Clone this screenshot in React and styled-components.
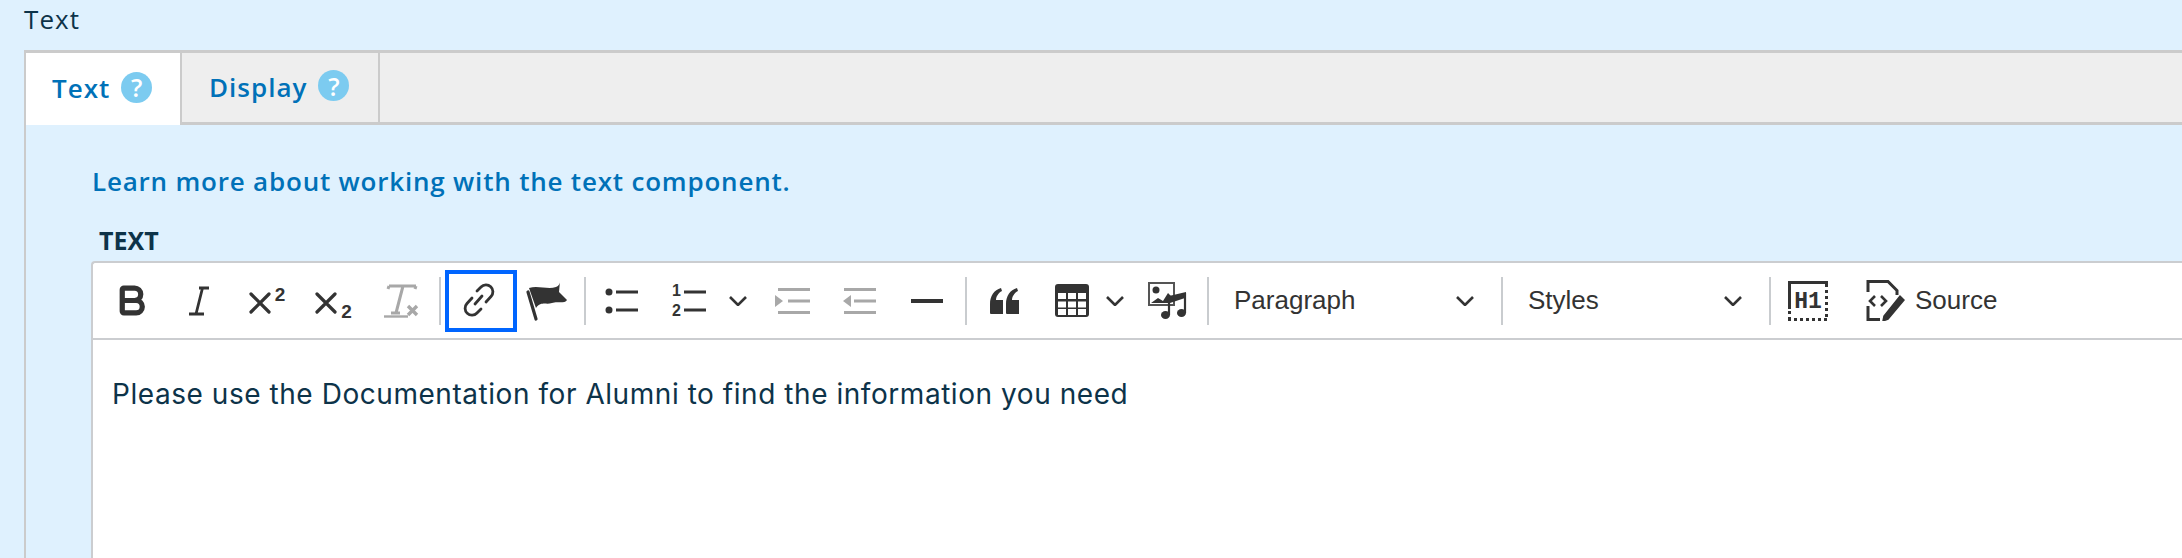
import styled, { createGlobalStyle } from 'styled-components'
import { Bold } from 'lucide-react'

const GlobalStyle = createGlobalStyle`
  html, body {
    margin: 0;
    height: 558px;
    overflow: hidden;
    background: #dff1fe;
  }
`

const Page = styled.div`
  height: 558px;
  overflow: hidden;
  padding-left: 24px;
  color: #0d3349;
  font-family: "Open Sans", "DejaVu Sans", sans-serif;
`

const FieldLabel = styled.div`
  height: 38px;
  line-height: 38px;
  margin-bottom: 12px;
  font-size: 26px;
  letter-spacing: 1.1px;
`

const Panel = styled.div`
  border-top: 3px solid #cbcbcb;
  border-left: 2px solid #cbcbcb;
`

const TabBar = styled.div`
  display: flex;
  height: 69px;
  background: #eeeeee;
  border-bottom: 3px solid #cbcbcb;
`

const Tab = styled.div`
  display: flex;
  align-items: center;
  gap: 11px;
  width: ${(p) => p.$w}px;
  height: ${(p) => (p.$active ? 72 : 69)}px;
  padding: 0 0 2px ${(p) => p.$pad}px;
  box-sizing: border-box;
  border-right: 2px solid #cbcbcb;
  background: ${(p) => (p.$active ? '#fff' : 'transparent')};
  color: #0071b8;
  font-size: 26px;
  font-weight: 600;
  letter-spacing: 1px;
`

const HelpBadge = styled.span`
  display: inline-flex;
  align-items: center;
  justify-content: center;
  width: 31px;
  height: 31px;
  margin-top: -2px;
  border-radius: 50%;
  background: #7ccbf0;
  color: #fff;
  font-size: 25px;
  font-weight: 600;
  letter-spacing: 0;
`

const Content = styled.div`
  padding: 38px 0 0 65px;
`

const LearnLink = styled.a`
  display: block;
  height: 36px;
  line-height: 36px;
  margin-left: 1px;
  color: #0071b8;
  font-size: 26px;
  font-weight: 600;
  letter-spacing: 0.8px;
`

const EditorLabel = styled.div`
  height: 36px;
  line-height: 36px;
  margin: 23px 0 3px 8px;
  font-size: 25px;
  font-weight: 700;
`

const Editor = styled.div`
  border: 2px solid #cbcdd0;
  border-right: none;
  border-radius: 4px 0 0 0;
  background: #fff;
`

const Toolbar = styled.div`
  display: flex;
  align-items: center;
  height: 75px;
  padding-left: 1px;
  border-bottom: 2px solid #cbcdd0;
`

const Slot = styled.div`
  display: flex;
  align-items: center;
  justify-content: center;
  flex: none;
  width: ${(p) => p.$w}px;
  height: 62px;
`

const FocusedSlot = styled(Slot)`
  box-sizing: border-box;
  margin-left: 4px;
  border: 4px solid #0065ff;
`

const Separator = styled.div`
  flex: none;
  width: 2px;
  height: 48px;
  margin-left: ${(p) => p.$ml || 0}px;
  background: #c9cccf;
`

const Dropdown = styled.div`
  display: flex;
  align-items: center;
  justify-content: space-between;
  flex: none;
  box-sizing: border-box;
  width: ${(p) => p.$w}px;
  padding: 0 27px 0 25px;
  color: #333;
  font-family: "Liberation Sans", Arial, sans-serif;
  font-size: 26px;
`

const SourceButton = styled.div`
  display: flex;
  align-items: center;
  gap: 10px;
  padding-left: 21px;
  color: #333;
  font-family: "Liberation Sans", Arial, sans-serif;
  font-size: 26px;
`

const EditorBody = styled.div`
  height: 300px;
  padding: 34px 0 0 19px;
  font-family: "Inter", "Noto Sans", sans-serif;
  font-size: 28px;
  letter-spacing: 0.55px;
  line-height: 40px;
`

const ScriptWrap = styled.div`
  display: flex;
  gap: 4px;
  height: 36px;
  svg {
    margin-top: 9px;
  }
`

const Digit = styled.span`
  display: block;
  height: 15px;
  line-height: 15px;
  color: #333;
  font-family: "Liberation Sans", Arial, sans-serif;
  font-size: ${(p) => p.$size || 19}px;
  font-weight: 700;
`

const ScriptDigit = styled(Digit)`
  align-self: ${(p) => (p.$sub ? 'flex-end' : 'flex-start')};
  margin-top: ${(p) => (p.$sub ? 0 : 4)}px;
`

const NumberedWrap = styled.div`
  display: flex;
  align-items: center;
  gap: 3px;
`

const NumberColumn = styled.div`
  display: flex;
  flex-direction: column;
  gap: 5px;
`

const dark = '#333'
const gray = '#a8a8a8'

const Chevron = () => (
  <svg width="18" height="10" viewBox="0 0 18 10" fill="none" stroke={dark} strokeWidth="2.6">
    <path d="M1 1l8 8 8-8" />
  </svg>
)

const ItalicIcon = () => (
  <svg width="22" height="30" viewBox="0 0 22 30" fill="none" stroke={dark} strokeWidth="2.8">
    <path d="M11 2h10M1 28h15M14.500 2 8 28" />
  </svg>
)

const ScriptIcon = ({ sub }) => (
  <ScriptWrap>
    <svg width="22" height="22" viewBox="0 0 22 22" fill="none">
      <path d="M2 2l18 18M20 2 2 20" stroke={dark} strokeWidth="3.2" strokeLinecap="round" />
    </svg>
    <ScriptDigit $sub={sub}>2</ScriptDigit>
  </ScriptWrap>
)

const ClearIcon = () => (
  <svg width="36" height="35" viewBox="0 0 36 35" fill="none" stroke={gray}>
    <path d="M6 3h27M6 3l-1 3M33 3l-1 3M20 3l-7 27M8 30h9" strokeWidth="3" />
    <path d="M1 33.500h24" strokeWidth="2.400" />
    <path d="M25 23l9 9M34 23l-9 9" strokeWidth="3.400" />
  </svg>
)

const LinkIcon = () => (
  <svg width="32" height="34" viewBox="0 0 32 34" fill="none" stroke={dark} strokeWidth="2.8" strokeLinecap="round" style={{ marginLeft: -4, marginTop: -2 }}>
    <path d="M14 8l4-4a6.800 6.800 0 0 1 10 9.500l-5 5.500" />
    <path d="M9 15l-5 5.500a6.800 6.800 0 0 0 10 9.500l4-4" />
    <path d="M12 21l7-8" />
  </svg>
)

const FlagIcon = () => (
  <svg width="42" height="42" viewBox="0 0 42 42">
    <path d="M2 12l8 27" stroke={dark} strokeWidth="3.2" strokeLinecap="round" />
    <path
      d="M3 8C12 5 22 10 30 7c3-1 4-4 4-6l-1 11 8 8c-2 4-11 1-15 3-6 2-11-2-16 5z"
      fill={dark}
    />
  </svg>
)

const BulletIcon = () => (
  <svg width="34" height="26" viewBox="0 0 34 26" stroke={dark}>
    <circle cx="4" cy="4" r="3.500" fill={dark} stroke="none" />
    <circle cx="4" cy="22" r="3.500" fill={dark} stroke="none" />
    <path d="M11 4h22M11 22h22" strokeWidth="3" />
  </svg>
)

const NumberedIcon = () => (
  <NumberedWrap>
    <NumberColumn>
      <Digit $size={16}>1</Digit>
      <Digit $size={16}>2</Digit>
    </NumberColumn>
    <svg width="22" height="26" viewBox="0 0 22 26">
      <path d="M0 4h22M0 22h22" stroke={dark} strokeWidth="3" />
    </svg>
  </NumberedWrap>
)

const IndentIcon = ({ out }) => (
  <svg width="36" height="28" viewBox="0 0 36 28" fill={gray}>
    <path
      d={
        out
          ? 'M2 1h32v3H2zM12 12.500h22v3H12zM2 24h32v3H2zM1 14l8-6v12z'
          : 'M4 1h32v3H4zM14 12.500h22v3H14zM4 24h32v3H4zM1 8l8 6-8 6z'
      }
    />
  </svg>
)

const HrIcon = () => (
  <svg width="32" height="4" viewBox="0 0 32 4">
    <rect width="32" height="4" fill={dark} />
  </svg>
)

const QuoteIcon = () => (
  <svg width="30" height="26" viewBox="0 0 30 26" fill={dark}>
    <path d="M0 16C0 8 4 2 11 0l1 3C8 5 6 9 6 12h7v14H1a1 1 0 0 1-1-1zM16 16c0-8 4-14 11-16l1 3c-4 2-6 6-6 9h7v14H17a1 1 0 0 1-1-1z" />
  </svg>
)

const TableIcon = () => (
  <svg width="34" height="33" viewBox="0 0 34 33">
    <rect width="34" height="33" rx="3" fill={dark} />
    {[9, 17.5, 25].map((y) =>
      [3, 13, 23].map((x) => <rect key={`${x}-${y}`} x={x} y={y} width="8" height="6" fill="#fff" />)
    )}
  </svg>
)

const MediaIcon = () => (
  <svg width="40" height="38" viewBox="0 0 40 38">
    <rect x="1" y="1" width="25" height="22" fill="none" stroke="#555" strokeWidth="2" />
    <circle cx="8" cy="8" r="3.500" fill={dark} />
    <path d="M3 21l7-5 5 3 5-8 5 5 12-3v3L22 21z" fill={dark} />
    <path d="M21 14l17-4v5l-17 4z" fill={dark} />
    <path d="M21 16v17M37 11v20" stroke={dark} strokeWidth="2.200" />
    <ellipse cx="17.500" cy="33" rx="4.500" ry="4" fill={dark} />
    <ellipse cx="33.500" cy="31" rx="4.500" ry="4" fill={dark} />
  </svg>
)

const HeadingIcon = () => (
  <svg width="40" height="40" viewBox="0 0 40 40" fill="none" stroke={dark}>
    <path d="M0 1.500h40M1.500 1.500V28" strokeWidth="3" />
    <path d="M38.500 3v34M1.500 30v8M0 38.500h40" strokeWidth="3" strokeDasharray="3 3" />
    <text
      x="20"
      y="27"
      textAnchor="middle"
      fill={dark}
      stroke="none"
      fontSize="23"
      fontWeight="700"
      fontFamily="Liberation Mono, monospace"
    >
      H1
    </text>
  </svg>
)

const SourceIcon = () => (
  <svg width="39" height="41" viewBox="0 0 39 41" fill="none" stroke={dark}>
    <path d="M2 12V1.500h20l9 9V15M2 26v13.500h12" strokeWidth="3" />
    <path d="M9 16l-5 5 5 5M15 16l5 5-5 5" strokeWidth="2.600" />
    <path d="M18 36l-1 5 5-2 16-19-4-4z" fill={dark} strokeWidth="1.500" />
  </svg>
)

function App() {
  return (
    <Page>
      <GlobalStyle />
      <FieldLabel>Text</FieldLabel>
      <Panel>
        <TabBar>
          <Tab $w={156} $pad={26} $active>
            Text <HelpBadge>?</HelpBadge>
          </Tab>
          <Tab $w={198} $pad={27}>
            Display <HelpBadge>?</HelpBadge>
          </Tab>
        </TabBar>
        <Content>
          <LearnLink>Learn more about working with the text component.</LearnLink>
          <EditorLabel>TEXT</EditorLabel>
          <Editor>
            <Toolbar>
              <Slot $w={74}><Bold size={37} color={dark} strokeWidth={3.4} /></Slot>
              <Slot $w={61}><ItalicIcon /></Slot>
              <Slot $w={76}><ScriptIcon /></Slot>
              <Slot $w={57}><ScriptIcon sub /></Slot>
              <Slot $w={77}><ClearIcon /></Slot>
              <Separator />
              <FocusedSlot $w={72}><LinkIcon /></FocusedSlot>
              <Slot $w={60}><FlagIcon /></Slot>
              <Separator $ml={7} />
              <Slot $w={72}><BulletIcon /></Slot>
              <Slot $w={62}><NumberedIcon /></Slot>
              <Slot $w={36}><Chevron /></Slot>
              <Slot $w={72}><IndentIcon /></Slot>
              <Slot $w={64}><IndentIcon out /></Slot>
              <Slot $w={70}><HrIcon /></Slot>
              <Separator $ml={3} />
              <Slot $w={76}><QuoteIcon /></Slot>
              <Slot $w={58}><TableIcon /></Slot>
              <Slot $w={28}><Chevron /></Slot>
              <Slot $w={78}><MediaIcon /></Slot>
              <Separator />
              <Dropdown $w={292}>Paragraph <Chevron /></Dropdown>
              <Separator />
              <Dropdown $w={266}>Styles <Chevron /></Dropdown>
              <Separator />
              <Slot $w={74}><HeadingIcon /></Slot>
              <SourceButton><SourceIcon /> Source</SourceButton>
            </Toolbar>
            <EditorBody>Please use the Documentation for Alumni to find the information you need</EditorBody>
          </Editor>
        </Content>
      </Panel>
    </Page>
  )
}

export default App
